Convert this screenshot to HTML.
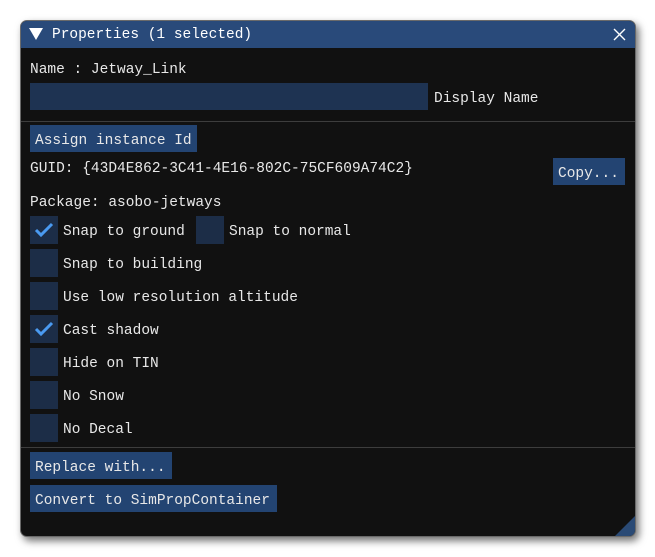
<!DOCTYPE html>
<html><head><style>
body{margin:0;width:655px;height:557px;background:#fff;position:relative;overflow:hidden;font-family:"Liberation Mono",monospace;font-size:14.5px;color:#e8e8e8}
.win{position:absolute;left:20px;top:20px;width:614px;height:515px;background:#111;border:1px solid #6a6a6a;border-radius:7px;box-shadow:3px 4px 8px rgba(0,0,0,.55);overflow:hidden}
.title{position:absolute;left:0;top:0;right:0;height:27px;background:#294a7a;color:#fff}
.a{position:absolute;white-space:pre;line-height:17px;margin-top:1px}
.btn{position:absolute;background:#234472;height:27px}
.cb{position:absolute;left:9px;width:28px;height:28px;background:#1c2d47}
.sep{position:absolute;left:0;right:0;height:1px;background:#3d3d3d}
</style></head><body>
<div class="win">
<div class="title">
<svg style="position:absolute;left:8px;top:7px" width="14" height="13"><path d="M0 0H14L7 12Z" fill="#fff"/></svg>
<div class="a" style="left:31px;top:5px">Properties (1 selected)</div>
<svg style="position:absolute;left:592px;top:7px" width="13" height="13"><path d="M1 1L12 12M12 1L1 12" stroke="#fff" stroke-width="1.4"/></svg>
</div>
<div class="a" style="left:9px;top:40px">Name : Jetway_Link</div>
<div class="btn" style="left:9px;top:62px;width:398px;background:#1e3352"></div>
<div class="a" style="left:413px;top:69px">Display Name</div>
<div class="sep" style="top:100px"></div>
<div class="btn" style="left:9px;top:104px;width:167px"></div>
<div class="a" style="left:14px;top:111px">Assign instance Id</div>
<div class="a" style="left:9px;top:139px">GUID: {43D4E862-3C41-4E16-802C-75CF609A74C2}</div>
<div class="btn" style="left:532px;top:137px;width:72px"></div>
<div class="a" style="left:537px;top:144px">Copy...</div>
<div class="a" style="left:9px;top:173px">Package: asobo-jetways</div>

<div class="cb" style="top:195px"><svg width="28" height="28"><path d="M6 14L11 19L22 8" stroke="#4a9af0" stroke-width="3" fill="none"/></svg></div>
<div class="a" style="left:42px;top:202px">Snap to ground</div>
<div class="cb" style="top:195px;left:175px"></div>
<div class="a" style="left:208px;top:202px">Snap to normal</div>
<div class="cb" style="top:228px"></div>
<div class="a" style="left:42px;top:235px">Snap to building</div>
<div class="cb" style="top:261px"></div>
<div class="a" style="left:42px;top:268px">Use low resolution altitude</div>
<div class="cb" style="top:294px"><svg width="28" height="28"><path d="M6 14L11 19L22 8" stroke="#4a9af0" stroke-width="3" fill="none"/></svg></div>
<div class="a" style="left:42px;top:301px">Cast shadow</div>
<div class="cb" style="top:327px"></div>
<div class="a" style="left:42px;top:334px">Hide on TIN</div>
<div class="cb" style="top:360px"></div>
<div class="a" style="left:42px;top:367px">No Snow</div>
<div class="cb" style="top:393px"></div>
<div class="a" style="left:42px;top:400px">No Decal</div>
<div class="sep" style="top:426px"></div>
<div class="btn" style="left:9px;top:431px;width:142px"></div>
<div class="a" style="left:14px;top:438px">Replace with...</div>
<div class="btn" style="left:9px;top:464px;width:247px"></div>
<div class="a" style="left:14px;top:471px">Convert to SimPropContainer</div>
<svg style="position:absolute;right:0;bottom:0" width="20" height="20"><path d="M20 0V20H0Z" fill="#2a4a75"/></svg>
</div>
</body></html>
